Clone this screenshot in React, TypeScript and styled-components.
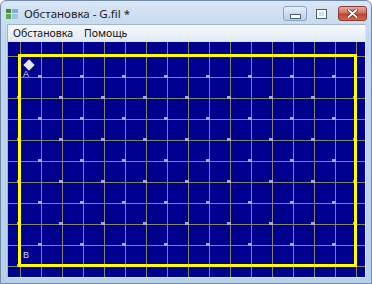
import * as React from "react";
import styled, { createGlobalStyle } from "styled-components";

const GlobalStyle = createGlobalStyle`
  html, body {
    margin: 0;
    padding: 0;
    background: #ffffff;
  }
  body {
    font-family: "Noto Sans", "DejaVu Sans", sans-serif;
  }
`;

const CELL = 21;
const CANVAS_W = 359;
const CANVAS_H = 235;
const GRID_X0 = 12;
const GRID_Y0 = 14;

const SWindow = styled.div`
  width: 372px;
  height: 284px;
  box-sizing: border-box;
  display: flex;
  flex-direction: column;
  border: 1px solid #6f8aa8;
  border-radius: 6px 6px 0 0;
  background: linear-gradient(to bottom, #d9e6f5 0px, #c3d7ee 30px, #b9d0ea 100%);
  overflow: hidden;
`;

const STitleBar = styled.div`
  height: 24px;
  display: flex;
  align-items: center;
  padding: 0 4px 0 5px;
`;

const SAppIcon = styled.div`
  width: 12px;
  height: 10px;
  margin-top: 2px;
  display: grid;
  grid-template-columns: 5px 6px;
  grid-template-rows: 4px 5px;
  gap: 1px;
`;

const SIconCell = styled.div<{ $color: string }>`
  background: ${(p) => p.$color};
`;

const STitle = styled.div`
  flex: 1;
  margin-left: 6px;
  margin-top: 2px;
  font-size: 11.5px;
  color: #1e1e1e;
  white-space: nowrap;
`;

const SControls = styled.div`
  display: flex;
  align-items: center;
  gap: 2px;
  margin-top: 2px;
`;

const SCtrlButton = styled.div<{ $kind: "min" | "max" | "close" }>`
  height: 15px;
  width: ${(p) => (p.$kind === "close" ? "29px" : "24px")};
  box-sizing: border-box;
  display: flex;
  align-items: center;
  justify-content: center;
  border-radius: 3px;
  border: 1px solid
    ${(p) =>
      p.$kind === "close" ? "#8a3b35" : p.$kind === "min" ? "#8aa3c1" : "transparent"};
  background: ${(p) =>
    p.$kind === "close"
      ? "linear-gradient(to bottom, #e9a99c 0%, #d5705d 45%, #c0432c 55%, #d2664e 100%)"
      : p.$kind === "min"
      ? "linear-gradient(to bottom, #e6eef8 0%, #cfdcee 50%, #bccde6 100%)"
      : "transparent"};
  margin-left: ${(p) => (p.$kind === "close" ? "3px" : "0")};
`;

const SMinGlyph = styled.div`
  width: 9px;
  height: 3px;
  margin-top: 5px;
  background: #ffffff;
  border: 1px solid #4f5f74;
`;

const SMaxGlyph = styled.div`
  width: 5px;
  height: 4px;
  border: 2px solid #ffffff;
  outline: 1px solid #4f5f74;
`;

const SClient = styled.div`
  flex: 1;
  display: flex;
  flex-direction: column;
  margin: 0 5px 5px 6px;
  border: 1px solid #9fb5d0;
  border-bottom-color: #dbe6f4;
  border-right-color: #dbe6f4;
  background: #f0f0f0;
`;

const SMenuBar = styled.div`
  height: 17px;
  display: flex;
  align-items: center;
  gap: 11px;
  padding: 0 0 0 5px;
  background: linear-gradient(to bottom, #f6f9fd 0%, #eaf0f8 60%, #dde7f3 100%);
`;

const SMenuItem = styled.div`
  font-size: 10.5px;
  color: #111111;
  line-height: 17px;
`;

const SCanvas = styled.div`
  flex: 1;
  background: #00008f;
  overflow: hidden;
`;

const Grid: React.FC = () => {
  const cols: number[] = [];
  for (let x = GRID_X0; x < CANVAS_W; x += CELL) cols.push(x);
  const rows: number[] = [];
  for (let y = GRID_Y0; y < CANVAS_H; y += CELL) rows.push(y);

  const dots: { x: number; y: number }[] = [];
  rows.forEach((y, ri) => {
    cols.forEach((x, ci) => {
      if ((ri + ci) % 2 === 0 && ri > 0) dots.push({ x, y });
    });
  });

  const left = cols[0];
  const right = cols[cols.length - 1];
  const top = rows[0];
  const bottom = rows[rows.length - 1];

  return (
    <svg width={CANVAS_W} height={CANVAS_H} style={{ display: "block" }}>
      <rect x={0} y={0} width={CANVAS_W} height={CANVAS_H} fill="#00008f" />
      {cols.map((x) => (
        <line key={"v" + x} x1={x + 0.5} y1={0} x2={x + 0.5} y2={CANVAS_H} stroke="#85856c" strokeWidth={1} />
      ))}
      {rows.map((y) => (
        <line key={"h" + y} x1={0} y1={y + 0.5} x2={CANVAS_W} y2={y + 0.5} stroke="#85856c" strokeWidth={1} />
      ))}
      {dots.map((d) => (
        <rect key={d.x + "-" + d.y} x={d.x - 3} y={d.y - 2} width={4} height={3} fill="#a8a8d8" />
      ))}
      <rect
        x={left - 0.5}
        y={top - 0.5}
        width={right - left}
        height={bottom - top}
        fill="none"
        stroke="#ffff00"
        strokeWidth={3}
      />
      <rect x={17} y={19} width={8} height={8} fill="#e6e6e6" transform="rotate(45 21 23)" />
      <text x={15} y={35} fill="#d8d8f0" fontSize={9} fontFamily="Liberation Sans, Arial, sans-serif">
        A
      </text>
      <text x={15} y={216} fill="#d8d8f0" fontSize={9} fontFamily="Liberation Sans, Arial, sans-serif">
        B
      </text>
    </svg>
  );
};

const App: React.FC = () => (
  <>
    <GlobalStyle />
    <SWindow>
      <STitleBar>
        <SAppIcon>
          <SIconCell $color="#3c8a3c" />
          <SIconCell $color="#7fb0d8" />
          <SIconCell $color="#5fa85f" />
          <SIconCell $color="#9ec6e6" />
        </SAppIcon>
        <STitle>Обстановка - G.fil *</STitle>
        <SControls>
          <SCtrlButton $kind="min">
            <SMinGlyph />
          </SCtrlButton>
          <SCtrlButton $kind="max">
            <SMaxGlyph />
          </SCtrlButton>
          <SCtrlButton $kind="close">
            <svg width="11" height="9" viewBox="0 0 11 9">
              <path d="M1.5 1 L9.5 8 M9.5 1 L1.5 8" stroke="#5a1c14" strokeWidth="3.4" strokeLinecap="round" />
              <path d="M1.5 1 L9.5 8 M9.5 1 L1.5 8" stroke="#ffffff" strokeWidth="2" strokeLinecap="round" />
            </svg>
          </SCtrlButton>
        </SControls>
      </STitleBar>
      <SClient>
        <SMenuBar>
          <SMenuItem>Обстановка</SMenuItem>
          <SMenuItem>Помощь</SMenuItem>
        </SMenuBar>
        <SCanvas>
          <Grid />
        </SCanvas>
      </SClient>
    </SWindow>
  </>
);

export default App;
